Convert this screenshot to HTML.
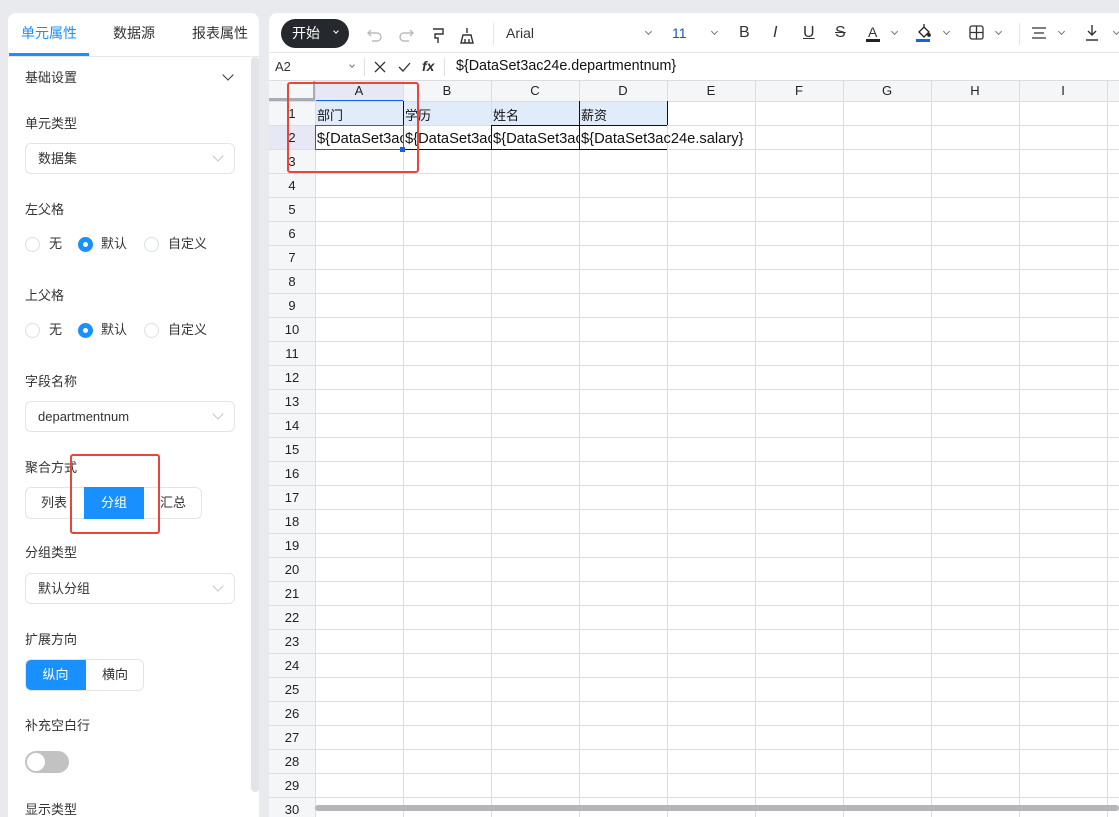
<!DOCTYPE html>
<html><head><meta charset="utf-8"><style>
*{box-sizing:border-box;margin:0;padding:0}
body{width:1119px;height:817px;background:#e9eaee;font-family:"Liberation Sans","Noto Sans CJK SC",sans-serif;position:relative;overflow:hidden;color:#333}
.abs{position:absolute}
#left{left:8px;top:13px;width:251px;height:804px;background:#fff;border-radius:8px 8px 0 0;overflow:hidden}
.tab{position:absolute;top:12px;font-size:14px;color:#333;line-height:16px}
.lbl{position:absolute;left:17px;font-size:13px;color:#333;line-height:16px}
.sel{position:absolute;left:17px;width:210px;height:31px;border:1px solid #e2e4e8;border-radius:6px;font-size:13px;padding:0 12px;line-height:29px;color:#333}
.sel:after{content:"";position:absolute;right:12px;top:8px;width:7px;height:7px;border-right:1px solid #c0c4cc;border-bottom:1px solid #c0c4cc;transform:rotate(45deg)}
.radio{position:absolute;width:15px;height:15px;border:1px solid #dcdfe6;border-radius:50%}
.radio.on{border:5px solid #1890ff}
.rt{position:absolute;font-size:13px;line-height:16px}
#right{left:269px;top:13px;width:850px;height:804px;background:#fff;border-radius:8px 0 0 0;overflow:hidden}
.gl{position:absolute;background:#dcdde0}
.ch{position:absolute;top:68px;height:20px;font-size:13px;text-align:center;line-height:20px;color:#222}
.rh{position:absolute;left:0;width:46px;font-size:13px;text-align:center;color:#222;line-height:16px}
.cell{position:absolute;font-size:14.7px;white-space:nowrap;overflow:hidden;line-height:24px;padding-left:2px;color:#111}
.ti{position:absolute;top:11px;font-size:16px;color:#333;line-height:18px}
.dn{position:absolute;top:16px;width:5px;height:5px;border-right:1px solid #777;border-bottom:1px solid #777;transform:rotate(45deg)}
</style></head><body>
<div id="left" class="abs">
 <div class="tab" style="left:13px;color:#1890ff">单元属性</div>
 <div class="tab" style="left:105px">数据源</div>
 <div class="tab" style="left:184px">报表属性</div>
 <div class="abs" style="left:0;top:43px;width:251px;height:1px;background:#e8e8e8"></div>
 <div class="abs" style="left:1px;top:40px;width:80px;height:3px;background:#1890ff"></div>
 <div class="abs" style="left:243px;top:44px;width:8px;height:735px;background:#e3e4e7;border-radius:4px"></div>
 <div class="lbl" style="top:57px">基础设置</div>
 <div class="abs" style="left:216px;top:58px;width:8px;height:8px;border-right:1.3px solid #333;border-bottom:1.3px solid #333;transform:rotate(45deg)"></div>
 <div class="lbl" style="top:103px">单元类型</div>
 <div class="sel" style="top:130px">数据集</div>
 <div class="lbl" style="top:189px">左父格</div>
 <div class="radio" style="left:17px;top:224px"></div><div class="rt" style="left:41px;top:223px">无</div>
 <div class="radio on" style="left:70px;top:224px"></div><div class="rt" style="left:93px;top:223px">默认</div>
 <div class="radio" style="left:136px;top:224px"></div><div class="rt" style="left:160px;top:223px">自定义</div>
 <div class="lbl" style="top:275px">上父格</div>
 <div class="radio" style="left:17px;top:310px"></div><div class="rt" style="left:41px;top:309px">无</div>
 <div class="radio on" style="left:70px;top:310px"></div><div class="rt" style="left:93px;top:309px">默认</div>
 <div class="radio" style="left:136px;top:310px"></div><div class="rt" style="left:160px;top:309px">自定义</div>
 <div class="lbl" style="top:361px">字段名称</div>
 <div class="sel" style="top:388px">departmentnum</div>
 <div class="lbl" style="top:447px">聚合方式</div>
 <div class="abs" style="left:17px;top:474px;width:177px;height:32px;border:1px solid #e2e4e8;border-radius:6px"></div>
 <div class="rt" style="left:33px;top:482px">列表</div>
 <div class="abs" style="left:76px;top:474px;width:60px;height:32px;background:#1890ff;color:#fff;font-size:13px;text-align:center;line-height:32px">分组</div>
 <div class="rt" style="left:152px;top:482px">汇总</div>
 <div class="lbl" style="top:532px">分组类型</div>
 <div class="sel" style="top:560px">默认分组</div>
 <div class="lbl" style="top:619px">扩展方向</div>
 <div class="abs" style="left:17px;top:646px;width:119px;height:32px;border:1px solid #e2e4e8;border-radius:6px;overflow:hidden">
  <div class="abs" style="left:-1px;top:-1px;width:61px;height:32px;background:#1890ff;color:#fff;font-size:13px;text-align:center;line-height:32px">纵向</div>
  <div class="abs" style="left:60px;top:0;width:58px;height:30px;font-size:13px;text-align:center;line-height:30px">横向</div>
 </div>
 <div class="lbl" style="top:705px">补充空白行</div>
 <div class="abs" style="left:17px;top:738px;width:44px;height:22px;background:#c2c2c2;border-radius:11px"></div>
 <div class="abs" style="left:19px;top:740px;width:18px;height:18px;background:#fff;border-radius:50%"></div>
 <div class="lbl" style="top:789px">显示类型</div>
</div>

<div id="right" class="abs">
 <div class="abs" style="left:12px;top:6px;width:68px;height:29px;background:#25282d;border-radius:15px;color:#fff;font-size:14px;line-height:29px;padding-left:11px">开始</div>
 <div class="abs" style="left:65px;top:16px;width:4px;height:4px;border-right:1px solid #fff;border-bottom:1px solid #fff;transform:rotate(45deg)"></div>
 <svg class="abs" style="left:98px;top:12px" width="160" height="20" fill="none" stroke-width="1.4">
  <path d="M4 5 L1 8 L4 11 M1 8 H10 A4 4 0 0 1 10 16 H5" stroke="#bbb"/>
  <path d="M43 5 L46 8 L43 11 M46 8 H37 A4 4 0 0 0 37 16 H42" stroke="#bbb"/>
  <path d="M66 4 H76 V9 H68 V13 H71 V18" stroke="#333"/>
  <path d="M100 3 V8 M96 10 H104 L106 18 H94 Z M98 14 V18 M102 14 V18" stroke="#333"/>
 </svg>
 <div class="abs" style="left:224px;top:10px;width:1px;height:22px;background:#e5e5e5"></div>
 <div class="abs" style="left:237px;top:12px;font-size:14px;line-height:16px">Arial</div>
 <div class="dn" style="left:377px"></div>
 <div class="abs" style="left:403px;top:12px;font-size:14px;color:#1f4fbf;line-height:16px">11</div>
 <div class="dn" style="left:443px"></div>
 <div class="ti" style="left:470px">B</div>
 <div class="ti" style="left:504px;font-style:italic">I</div>
 <div class="ti" style="left:534px;text-decoration:underline">U</div>
 <div class="ti" style="left:566px;text-decoration:line-through">S</div>
 <div class="ti" style="left:599px;font-size:14px;top:10px">A</div><div class="abs" style="left:597px;top:26px;width:14px;height:3px;background:#222"></div>
 <div class="dn" style="left:623px"></div>
 <svg class="abs" style="left:646px;top:10px" width="18" height="20" fill="none" stroke="#222" stroke-width="1.3"><path d="M4 9 L9 4 L14 9 L9 14 Z M9 4 V1"/><circle cx="14" cy="12" r="1.2" fill="#222"/><rect x="1" y="16" width="14" height="3" fill="#1b5cf0" stroke="none"/></svg>
 <div class="dn" style="left:675px"></div>
 <svg class="abs" style="left:700px;top:12px" width="16" height="16" fill="none" stroke="#333" stroke-width="1.3"><rect x="1" y="1" width="13" height="13" rx="2"/><path d="M7.5 1V14M1 7.5H14"/></svg>
 <div class="dn" style="left:727px"></div>
 <div class="abs" style="left:750px;top:10px;width:1px;height:22px;background:#e5e5e5"></div>
 <svg class="abs" style="left:762px;top:13px" width="16" height="14" stroke="#333" stroke-width="1.3"><path d="M1 2H15M3 7H13M1 12H15"/></svg>
 <div class="dn" style="left:790px"></div>
 <svg class="abs" style="left:816px;top:11px" width="14" height="18" fill="none" stroke="#333" stroke-width="1.4"><path d="M7 1V11M3 7L7 11L11 7M1 16H13"/></svg>
 <div class="dn" style="left:845px"></div>
 <div class="abs" style="left:0;top:39px;width:850px;height:1px;background:#e6e6e6"></div>
 <div class="abs" style="left:6px;top:46px;font-size:13px;line-height:16px">A2</div>
 <div class="abs" style="left:81px;top:50px;width:4px;height:4px;border-right:1px solid #777;border-bottom:1px solid #777;transform:rotate(45deg)"></div>
 <div class="abs" style="left:95px;top:45px;width:1px;height:18px;background:#e0e0e0"></div>
 <svg class="abs" style="left:104px;top:47px" width="50" height="14" fill="none" stroke="#333" stroke-width="1.3"><path d="M2 2L12 12M12 2L2 12M26 7L30 11L37 3"/></svg>
 <div class="abs" style="left:153px;top:45px;font-size:14px;font-style:italic;font-weight:bold;line-height:16px">fx</div>
 <div class="abs" style="left:175px;top:45px;width:1px;height:18px;background:#e0e0e0"></div>
 <div class="abs" style="left:187px;top:45px;font-size:14.3px;color:#111;line-height:16px">${DataSet3ac24e.departmentnum}</div>
 <div class="abs" style="left:0;top:67px;width:850px;height:1px;background:#dcdde0"></div>
 <div class="abs" style="left:0;top:68px;width:850px;height:20px;background:#f5f6f8"></div>
 <div class="abs" style="left:0;top:68px;width:46px;height:740px;background:#f5f6f8"></div>
 <div class="abs" style="left:0;top:85px;width:46px;height:3px;background:#a8abb2"></div>
 <div class="abs" style="left:44px;top:68px;width:2px;height:20px;background:#a8abb2"></div>
 <div class="abs" style="left:46px;top:68px;width:88px;height:20px;background:#e6e9f5"></div>
 <div class="abs" style="left:46px;top:87px;width:88px;height:1px;background:#1b5cf0"></div>
 <div class="abs" style="left:0;top:112px;width:46px;height:24px;background:#e6e9f5"></div>
 <div class="abs" style="left:46px;top:88px;width:352px;height:24px;background:#e1ecfb"></div>
 <div id="lines"></div>
 <div class="ch" style="left:46px;width:88px">A</div><div class="ch" style="left:134px;width:88px">B</div><div class="ch" style="left:222px;width:88px">C</div><div class="ch" style="left:310px;width:88px">D</div><div class="ch" style="left:398px;width:88px">E</div><div class="ch" style="left:486px;width:88px">F</div><div class="ch" style="left:574px;width:88px">G</div><div class="ch" style="left:662px;width:88px">H</div><div class="ch" style="left:750px;width:88px">I</div>
 <div class="cell" style="left:46px;top:91px;font-size:13px">部门</div>
 <div class="cell" style="left:134px;top:91px;font-size:13px">学历</div>
 <div class="cell" style="left:222px;top:91px;font-size:13px">姓名</div>
 <div class="cell" style="left:310px;top:91px;font-size:13px">薪资</div>
 <div class="cell" style="left:46px;top:114px;width:88px">${DataSet3ac24e.departmentnum}</div>
 <div class="cell" style="left:134px;top:114px;width:88px">${DataSet3ac24e.edu}</div>
 <div class="cell" style="left:222px;top:114px;width:88px">${DataSet3ac24e.name}</div>
 <div class="cell" style="left:310px;top:114px">${DataSet3ac24e.salary}</div>
 <div class="abs" style="left:134px;top:88px;width:1px;height:48px;background:#111"></div>
 <div class="abs" style="left:222px;top:112px;width:1px;height:24px;background:#111"></div>
 <div class="abs" style="left:310px;top:88px;width:1px;height:48px;background:#111"></div>
 <div class="abs" style="left:398px;top:88px;width:1px;height:24px;background:#111"></div>
 <div class="abs" style="left:222px;top:112px;width:176px;height:1px;background:#111"></div>
 <div class="abs" style="left:134px;top:136px;width:264px;height:1px;background:#111"></div>
 <div class="abs" style="left:46px;top:112px;width:89px;height:25px;border:1px solid #1b5cf0"></div>
 <div class="abs" style="left:131px;top:134px;width:5px;height:5px;background:#1b5cf0"></div>
 <div class="abs" style="left:46px;top:792px;width:804px;height:6px;background:#b5b6ba;border-radius:3px"></div>
 <div class="abs" style="left:18px;top:69px;width:132px;height:91px;border:2.5px solid #e8453c;border-radius:3px"></div>
</div>
<div class="abs" style="left:70px;top:454px;width:90px;height:80px;border:2.5px solid #e8453c;border-radius:3px"></div>
<script>
var L=document.getElementById('lines'),h='';
for(var i=0;i<=9;i++){var x=46+i*88;h+='<div class="gl" style="left:'+x+'px;top:68px;width:1px;height:740px"></div>';}
for(var r=0;r<=30;r++){var y=88+r*24;h+='<div class="gl" style="left:0;top:'+y+'px;width:850px;height:1px"></div>';}
for(var r=1;r<=30;r++){var y=88+(r-1)*24;h+='<div class="rh" style="top:'+(y+5)+'px">'+r+'</div>';}
L.innerHTML=h;
</script>
</body></html>
